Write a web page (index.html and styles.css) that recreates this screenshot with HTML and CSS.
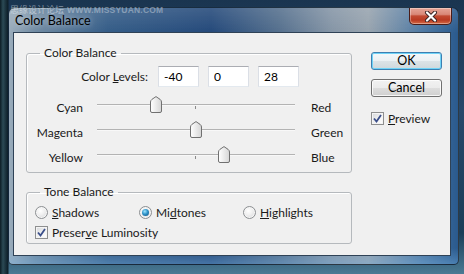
FILE: index.html
```html
<!DOCTYPE html>
<html>
<head>
<meta charset="utf-8">
<link rel="stylesheet" href="styles.css">
</head>
<body>
<div class="desk">
  <div class="window">
    <div class="titlebar">
      <span class="title">Color Balance</span>
      <span class="close">
        <svg width="14" height="11" viewBox="0 0 14 11">
          <path d="M3 1.5 L11 9.5 M11 1.5 L3 9.5" stroke="#3a2222" stroke-width="4" stroke-linecap="round"/>
          <path d="M3 1.5 L11 9.5 M11 1.5 L3 9.5" stroke="#ffffff" stroke-width="2.2" stroke-linecap="round"/>
        </svg>
      </span>
    </div>
    <div class="client">
      <div class="main">
        <fieldset class="group g1">
          <legend>Color Balance</legend>
          <div class="levels">
            <span class="levels-label">Color <u>L</u>evels:</span>
            <input class="num" value="-40">
            <input class="num" value="0">
            <input class="num" value="28">
          </div>
          <div class="srow">
            <span class="lname">Cyan</span>
            <div class="track"><i class="tick"></i><b class="thumb" style="left:30%"><svg width="12" height="17" viewBox="0 0 12 17"><defs><linearGradient id="tg1" x1="0" y1="0" x2="1" y2="0"><stop offset="0" stop-color="#ffffff"/><stop offset="1" stop-color="#d6d6d6"/></linearGradient></defs><path d="M0.5 15 V6 Q0.5 4.5 2 3.3 L6 0.6 L10 3.3 Q11.5 4.5 11.5 6 V15 Q11.5 16.5 10 16.5 H2 Q0.5 16.5 0.5 15 Z" fill="url(#tg1)" stroke="#707070"/></svg></b></div>
            <span class="rname">Red</span>
          </div>
          <div class="srow">
            <span class="lname">Magenta</span>
            <div class="track"><b class="thumb" style="left:50%"><svg width="12" height="17" viewBox="0 0 12 17"><path d="M0.5 15 V6 Q0.5 4.5 2 3.3 L6 0.6 L10 3.3 Q11.5 4.5 11.5 6 V15 Q11.5 16.5 10 16.5 H2 Q0.5 16.5 0.5 15 Z" fill="url(#tg1)" stroke="#707070"/></svg></b></div>
            <span class="rname">Green</span>
          </div>
          <div class="srow">
            <span class="lname">Yellow</span>
            <div class="track"><i class="tick"></i><b class="thumb" style="left:64%"><svg width="12" height="17" viewBox="0 0 12 17"><path d="M0.5 15 V6 Q0.5 4.5 2 3.3 L6 0.6 L10 3.3 Q11.5 4.5 11.5 6 V15 Q11.5 16.5 10 16.5 H2 Q0.5 16.5 0.5 15 Z" fill="url(#tg1)" stroke="#707070"/></svg></b></div>
            <span class="rname">Blue</span>
          </div>
        </fieldset>
        <fieldset class="group g2">
          <legend>Tone Balance</legend>
          <div class="radios">
            <span class="opt"><span class="radio"></span><span><u>S</u>hadows</span></span>
            <span class="opt"><span class="radio on"></span><span>Mi<u>d</u>tones</span></span>
            <span class="opt"><span class="radio"></span><span><u>H</u>ighlights</span></span>
          </div>
          <div class="opt check-row"><span class="check"><svg width="9" height="9" viewBox="0 0 9 9"><path d="M1 4.5 L3.5 7.5 L8 1" fill="none" stroke="#3b4f8a" stroke-width="1.8"/></svg></span><span>Preser<u>v</u>e Luminosity</span></div>
        </fieldset>
      </div>
      <div class="side">
        <button class="btn default">OK</button>
        <button class="btn">Cancel</button>
        <div class="opt preview"><span class="check"><svg width="9" height="9" viewBox="0 0 9 9"><path d="M1 4.5 L3.5 7.5 L8 1" fill="none" stroke="#3b4f8a" stroke-width="1.8"/></svg></span><span><u>P</u>review</span></div>
      </div>
    </div>
  </div>
  <div class="watermark"><span class="wm-cn">思缘设计论坛</span> <span class="wm-en">WWW.MISSYUAN.COM</span></div>
</div>
</body>
</html>
```

FILE: styles.css
```css
* { box-sizing: border-box; }
html, body { margin: 0; padding: 0; }
body {
  width: 464px;
  height: 274px;
  overflow: hidden;
  font-family: Lato, "Liberation Sans", sans-serif;
  font-size: 12px;
  color: #1a1a1a;
}
.desk {
  position: relative;
  width: 464px;
  height: 274px;
  padding: 7px 0 0 8px;
  background:
    linear-gradient(90deg, #0c1c24 0px, #2b4a55 3px, #0d1e28 8px, transparent 9px),
    linear-gradient(180deg, #1a3550 0%, #27486a 40%, #1b3d57 85%, #4a7a94 100%);
}
.window {
  width: 451px;
  height: 258px;
  padding: 0 7px 8px 4px;
  border: 1px solid rgba(10, 20, 30, 0.75);
  border-radius: 7px 7px 5px 5px;
  background:
    linear-gradient(180deg, rgba(255,255,255,0.12) 0px, rgba(255,255,255,0) 25px, rgba(0,0,0,0) 240px, rgba(120,180,230,0.45) 258px),
    linear-gradient(90deg, #9aacbb 0%, #6f8aa2 6%, #345c87 22%, #24497a 45%, #546f8d 60%, #8595a6 72%, #97a3ae 80%, #4f79a3 92%, #2a5a8e 100%);
  display: flex;
  flex-direction: column;
}
.titlebar {
  height: 24px;
  display: flex;
  align-items: flex-start;
  justify-content: space-between;
}
.title {
  margin: 6px 0 0 2px;
  font-size: 12.5px;
  line-height: 14px;
  color: #000;
  text-shadow: 0 0 6px rgba(255,255,255,0.6);
}
.close {
  width: 43px;
  height: 17px;
  margin-right: -1px;
  border: 1px solid #4a1c17;
  border-top: none;
  border-radius: 0 0 5px 5px;
  background: linear-gradient(180deg, #e6a596 0%, #d98878 40%, #c24a32 50%, #b93a22 75%, #d66a44 100%);
  box-shadow: inset 0 0 0 1px rgba(255,255,255,0.35);
  display: flex;
  align-items: center;
  justify-content: center;
}
.close svg { display: block; }
.client {
  flex: 1;
  background: #f0f0f0;
  border: 1px solid #2f4256;
  display: flex;
  padding: 0 0 0 12px;
}
.main {
  width: 326px;
  display: flex;
  flex-direction: column;
}
.group {
  margin: 0;
  padding: 0;
  min-width: 0;
  border: 1px solid #b5b9bd;
  border-radius: 3px;
  box-shadow: inset 1px 1px 0 #ffffff;
}
.group legend {
  margin-left: 13px;
  padding: 0 4px;
  height: 16px;
  line-height: 16px;
}
.g1 { margin-top: 12px; padding: 5px 0 4px 0; }
.g2 { margin-top: 11px; padding: 4px 0 3px 0; }
.levels {
  display: flex;
  align-items: center;
  height: 21px;
  margin-bottom: 6px;
}
.levels-label {
  width: 121px;
  text-align: right;
  margin-right: 10px;
}
.num {
  width: 41px;
  height: 21px;
  margin: 0 9px 0 0;
  padding: 0 0 0 5px;
  font: inherit;
  color: #000;
  background: #fff;
  border: 1px solid #dbdfe6;
  border-top-color: #abadb3;
  border-bottom-color: #e3e9ef;
  outline: none;
}
.srow {
  display: flex;
  align-items: center;
  height: 25px;
}
.lname {
  width: 56px;
  text-align: right;
  margin-right: 14px;
  padding-top: 3px;
}
.rname {
  margin-left: 16px;
  padding-top: 3px;
}
.track {
  position: relative;
  width: 198px;
  height: 2px;
  border-top: 1px solid #b3b3b3;
  border-bottom: 1px solid #f8f8f8;
  margin-top: -1px;
}
.tick {
  position: absolute;
  left: 98px;
  top: 1px;
  width: 1px;
  height: 3px;
  background: #8a8a8a;
}
.thumb {
  position: absolute;
  top: -9px;
  width: 12px;
  height: 17px;
  margin-left: -6px;
}
.thumb svg { display: block; }
.radios {
  display: flex;
  height: 16px;
  align-items: center;
  padding-left: 8px;
  margin-bottom: 4px;
}
.radios .opt { width: 104px; }
.opt {
  display: flex;
  align-items: center;
  gap: 4px;
}
.check-row { height: 16px; padding-left: 8px; }
.radio {
  width: 13px;
  height: 13px;
  border-radius: 50%;
  border: 1px solid #8c8f92;
  background: radial-gradient(circle at 40% 35%, #ffffff 0%, #f0f0f0 40%, #cfd2d5 100%);
  box-shadow: inset 0 0 0 1px #f6f6f6;
  position: relative;
  flex: none;
}
.radio.on::after {
  content: "";
  position: absolute;
  left: 2px;
  top: 2px;
  width: 7px;
  height: 7px;
  border-radius: 50%;
  background: radial-gradient(circle at 40% 35%, #9fe6ff 0%, #2f93c9 45%, #0b4a78 100%);
}
.check {
  width: 13px;
  height: 13px;
  flex: none;
  border: 1px solid #8e8f8f;
  background: linear-gradient(135deg, #d5d7da 0%, #f4f4f4 60%, #ffffff 100%);
  box-shadow: inset 0 0 0 1px #f4f4f4;
  display: flex;
  align-items: center;
  justify-content: center;
}
.check svg { display: block; }
.side {
  width: 71px;
  margin-left: 19px;
  padding-top: 19px;
  display: flex;
  flex-direction: column;
}
.btn {
  width: 71px;
  height: 18px;
  margin: 0 0 9px 0;
  padding: 0;
  font: inherit;
  font-size: 12.5px;
  color: #000;
  border: 1px solid #707070;
  border-radius: 3px;
  background: linear-gradient(180deg, #f2f2f2 0%, #ebebeb 50%, #dddddd 51%, #cfcfcf 100%);
  box-shadow: inset 0 0 0 1px rgba(255,255,255,0.8);
  line-height: 14px;
}
.btn.default {
  border-color: #3c7fb1;
  box-shadow: inset 0 0 0 1px #6fd3f7;
  background: linear-gradient(180deg, #f4f8fa 0%, #eaf0f3 50%, #dbe3e7 51%, #cfd8dc 100%);
}
.preview {
  margin-top: 5px;
  height: 14px;
}
.watermark {
  position: absolute;
  left: 10px;
  top: 4px;
  white-space: nowrap;
  color: rgba(235, 240, 245, 0.5);
  line-height: 9px;
}
.wm-cn {
  font-family: "Noto Sans CJK SC", sans-serif;
  font-size: 9px;
}
.wm-en {
  font-family: "Liberation Sans", sans-serif;
  font-size: 8.5px;
  font-weight: bold;
  letter-spacing: 0.2px;
  color: rgba(200, 210, 220, 0.5);
}
```
